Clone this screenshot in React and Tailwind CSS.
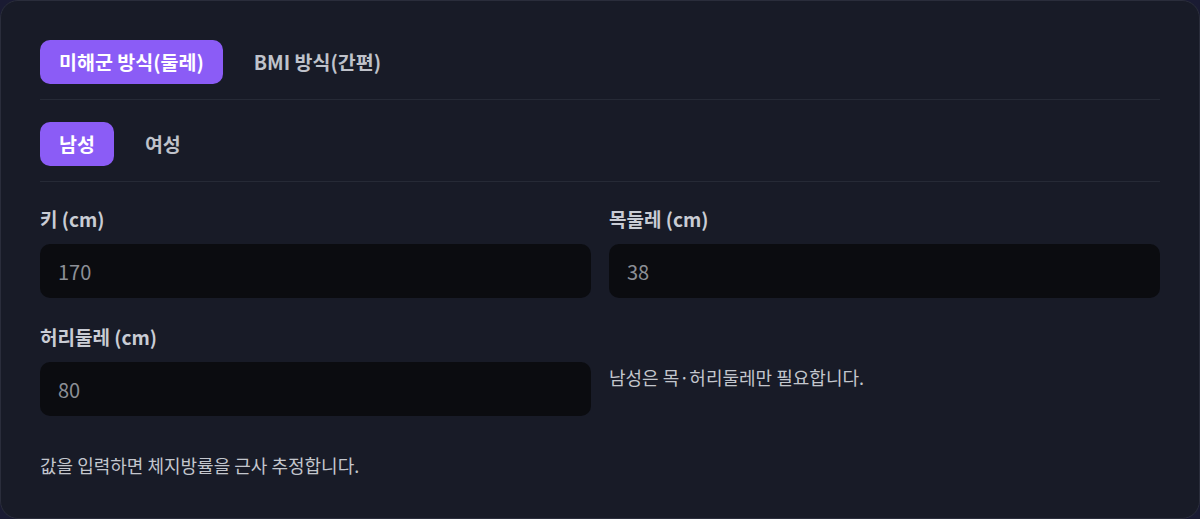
import React, { useState } from 'react';

const font = { fontFamily: '"Noto Sans CJK KR", "Noto Sans", sans-serif' };

const Tab = ({ active, children, onClick }) => (
  <button
    onClick={onClick}
    className={`h-11 rounded-[10px] px-[19px] text-[19.5px] font-bold leading-none ${
      active ? 'bg-[#8b5cf6] text-white' : 'text-[#bfc2ca]'
    }`}
  >
    {children}
  </button>
);

const Field = ({ label, value, onChange }) => (
  <div className="flex flex-col">
    <label className="mb-[13px] text-[19px] font-semibold leading-[24px] text-[#c9ccd4]">{label}</label>
    <input
      value={value}
      onChange={(e) => onChange(e.target.value)}
      className="h-[54px] w-full rounded-[10px] bg-[#0b0c10] px-[18px] text-[20px] text-[#8c8f96] outline-none"
    />
  </div>
);

export default function App() {
  const [method, setMethod] = useState('navy');
  const [sex, setSex] = useState('male');
  const [height, setHeight] = useState('170');
  const [neck, setNeck] = useState('38');
  const [waist, setWaist] = useState('80');

  return (
    <div className="h-[519px] w-[1200px] bg-[#1a1b33]" style={font}>
      <div className="h-full w-full rounded-[18px] border border-[#2a2d3b] bg-[#181b27] px-[39px] pt-[39px]">
        <div className="flex items-center gap-3 pb-[15px]">
          <Tab active={method === 'navy'} onClick={() => setMethod('navy')}>미해군 방식(둘레)</Tab>
          <Tab active={method === 'bmi'} onClick={() => setMethod('bmi')}>BMI 방식(간편)</Tab>
        </div>
        <div className="h-px bg-[#262a36]" />

        <div className="flex items-center gap-3 pb-[15px] pt-[22px]">
          <Tab active={sex === 'male'} onClick={() => setSex('male')}>남성</Tab>
          <Tab active={sex === 'female'} onClick={() => setSex('female')}>여성</Tab>
        </div>
        <div className="h-px bg-[#262a36]" />

        <div className="mt-[25px] grid grid-cols-2 gap-x-[18px] gap-y-[27px]">
          <Field label="키 (cm)" value={height} onChange={setHeight} />
          <Field label="목둘레 (cm)" value={neck} onChange={setNeck} />
          <Field label="허리둘레 (cm)" value={waist} onChange={setWaist} />
          <div className="pt-[40px] text-[18px] leading-[24px] text-[#c3c6cd]">남성은 목·허리둘레만 필요합니다.</div>
        </div>

        <p className="mt-[37px] text-[18px] leading-[24px] text-[#c3c6cd]">값을 입력하면 체지방률을 근사 추정합니다.</p>
      </div>
    </div>
  );
}
